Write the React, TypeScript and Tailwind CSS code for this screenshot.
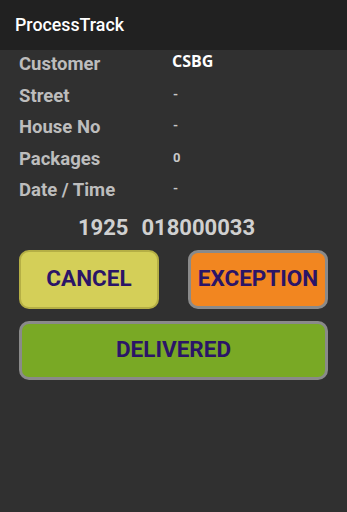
const rows = [
  { label: 'Customer', value: 'CSBG', strong: true },
  { label: 'Street', value: '-' },
  { label: 'House No', value: '-' },
  { label: 'Packages', value: '0' },
  { label: 'Date / Time', value: '-' },
];

export default function App() {
  return (
    <div className="min-h-screen bg-[#303030] font-['Roboto',sans-serif]">
      <div className="h-[50px] bg-[#212121] flex items-center pl-[15px]">
        <h1 className="text-[17.8px] font-medium text-white">ProcessTrack</h1>
      </div>

      <div className="-mt-[1px] px-[19px]">
        {rows.map((r) => (
          <div key={r.label} className="flex h-[31.5px] leading-[31.5px]">
            <div className="w-[153px] text-[18.5px] font-bold text-[#bdbdbd]">{r.label}</div>
            {r.strong ? (
              <div className="text-[16px] font-bold text-white font-['Open_Sans',sans-serif] leading-[20px] mt-[2px]">
                {r.value}
              </div>
            ) : (
              <div className="text-[13px] font-bold text-[#c8c8c8] leading-[15px] mt-[6px] pl-[1px]">{r.value}</div>
            )}
          </div>
        ))}
      </div>

      <div className="flex justify-center gap-[13px] pr-[14px] mt-[8px] text-[22px] font-bold text-[#d0d0d0] leading-[26px]">
        <span>1925</span>
        <span>018000033</span>
      </div>

      <div className="px-[19px] mt-[9px]">
        <div className="flex justify-between">
          <button className="w-[140px] h-[59px] rounded-[10px] bg-[#d4cf58] border-2 border-[#b5af45] text-[22.5px] font-bold text-[#2b1567]">
            CANCEL
          </button>
          <button className="w-[140px] h-[59px] rounded-[10px] bg-[#f28620] border-[3px] border-[#8a8a8a] text-[22.5px] font-bold text-[#2b1567]">
            EXCEPTION
          </button>
        </div>
        <button className="mt-[12px] w-full h-[59px] rounded-[10px] bg-[#79a925] border-[3px] border-[#8a8a8a] text-[22.5px] font-bold text-[#2b1567]">
          DELIVERED
        </button>
      </div>
    </div>
  );
}
